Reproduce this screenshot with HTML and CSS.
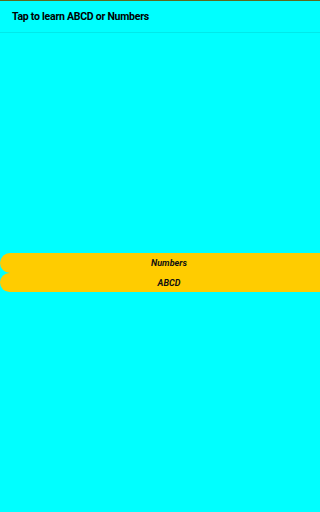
FILE: index.html
```html
<!DOCTYPE html>
<html>
<head>
<meta charset="utf-8">
<link rel="stylesheet" href="styles.css">
</head>
<body>
<div class="app">
  <header class="bar">Tap to learn ABCD or Numbers</header>
  <main class="content">
    <div class="buttons">
      <button class="pill">Numbers</button>
      <button class="pill">ABCD</button>
    </div>
  </main>
</div>
</body>
</html>
```
FILE: styles.css
```css
html, body {
  margin: 0;
  padding: 0;
  width: 100%;
  height: 100%;
  overflow: hidden;
}
body {
  background: #00ffff;
  font-family: Roboto, "Liberation Sans", sans-serif;
}
.app {
  display: flex;
  flex-direction: column;
  width: 100%;
  height: 100%;
  border-top: 1px solid #5d6a1e;
  box-sizing: border-box;
  overflow: hidden;
}
.bar {
  height: 31px;
  display: flex;
  align-items: center;
  padding-left: 12px;
  font-size: 10.5px;
  font-weight: 700;
  letter-spacing: -0.25px;
  color: #000;
  border-bottom: 1px solid #00eaea;
  flex: none;
}
.content {
  flex: 1;
  display: flex;
  flex-direction: column;
  padding-top: 220px;
  overflow: hidden;
  min-width: 0;
}
.buttons {
  display: flex;
  flex-direction: column;
  margin-right: -18px;
}
.pill {
  height: 20px;
  border: none;
  margin: 0;
  padding: 0;
  background: #ffcc00;
  border-radius: 10px 0 0 10px;
  font-family: Roboto, "Liberation Sans", sans-serif;
  font-size: 9px;
  font-weight: 700;
  font-style: italic;
  color: #111;
  text-align: center;
}
.pill + .pill {
  height: 19px;
}
```
